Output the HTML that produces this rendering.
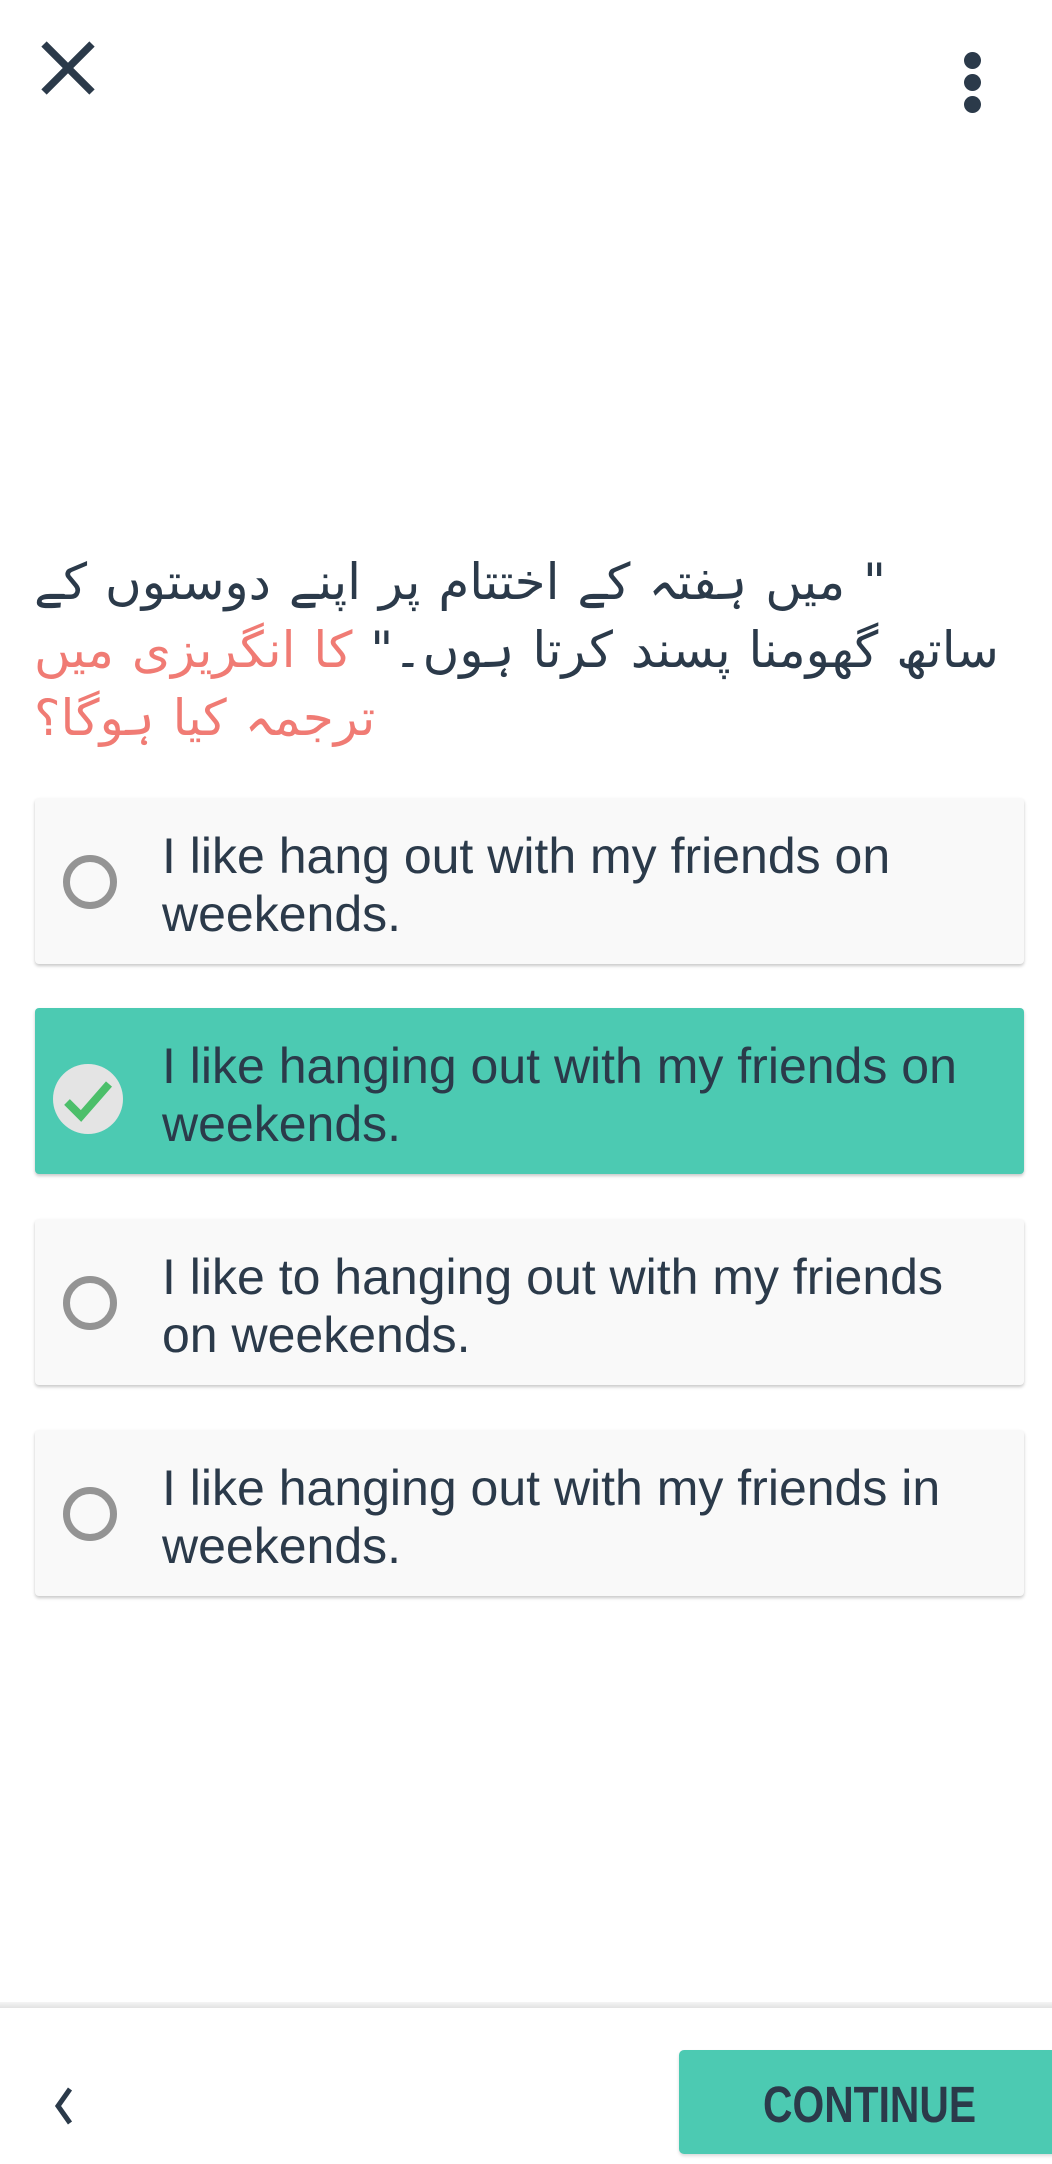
<!DOCTYPE html>
<html><head><meta charset="utf-8"><style>
*{margin:0;padding:0;box-sizing:border-box}
body{width:1052px;height:2164px;background:#fff;position:relative;overflow:hidden;font-family:"Liberation Sans",sans-serif;color:#2b3a4a}
.q{position:absolute;left:34px;right:40px;top:548px;direction:rtl;text-align:left;white-space:nowrap;font-family:"DejaVu Sans","Noto Sans CJK SC",sans-serif;font-size:50px;line-height:68px;word-spacing:2px;color:#2b3a4a}
.q .r{color:#f07b74}
.card{position:absolute;left:35px;width:989px;height:166px;background:#f9f9f9;border-radius:4px;box-shadow:0 2px 3px rgba(0,0,0,.22)}
.card.sel{background:#4ccab2}
.card .t{position:absolute;left:127px;top:29px;font-size:50px;line-height:58px;letter-spacing:0;width:860px}
.rad{position:absolute;left:60px;top:57px;width:54px;height:54px;border:7.5px solid #949494;border-radius:50%;margin-left:-32px}
.chk{position:absolute;left:18px;top:56px;width:70px;height:70px;border-radius:50%;background:#e4e4e4}
</style></head><body>
<svg style="position:absolute;left:40px;top:40px" width="56" height="56" viewBox="0 0 56 56"><path d="M4 4L52 52M52 4L4 52" stroke="#2b3a4a" stroke-width="7.5"/></svg>
<div style="position:absolute;left:964px;top:52px;width:20px">
<div style="width:17px;height:17px;border-radius:50%;background:#2b3a4a;margin-bottom:5px"></div>
<div style="width:17px;height:17px;border-radius:50%;background:#2b3a4a;margin-bottom:5px"></div>
<div style="width:17px;height:17px;border-radius:50%;background:#2b3a4a"></div></div>
<div class="q">" میں ہفتہ کے اختتام پر اپنے دوستوں کے<br>ساتھ گھومنا پسند کرتا ہوں۔" <span class="r">کا انگریزی میں<br>ترجمہ کیا ہوگا؟</span></div>
<div class="card" style="top:798px"><div class="rad"></div><div class="t">I like hang out with my friends on<br>weekends.</div></div>
<div class="card sel" style="top:1008px"><div class="chk"><svg width="70" height="70" viewBox="0 0 70 70"><path d="M14 38L28 52L56 20" fill="none" stroke="#4cbf6a" stroke-width="8"/></svg></div><div class="t">I like hanging out with my friends on<br>weekends.</div></div>
<div class="card" style="top:1219px"><div class="rad"></div><div class="t">I like to hanging out with my friends<br>on weekends.</div></div>
<div class="card" style="top:1430px"><div class="rad"></div><div class="t">I like hanging out with my friends in<br>weekends.</div></div>
<div style="position:absolute;left:0;top:2002px;width:1052px;height:6px;background:linear-gradient(#f4f4f4,#e2e2e2)"></div>
<svg style="position:absolute;left:52px;top:2086px" width="24" height="40" viewBox="0 0 24 40"><path d="M18 3L6 20L18 37" fill="none" stroke="#2b3a4a" stroke-width="5"/></svg>
<div style="position:absolute;left:679px;top:2050px;width:380px;height:104px;background:#4ccab2;border-radius:5px;box-shadow:0 2px 3px rgba(0,0,0,.15)"></div>
<div style="position:absolute;left:763px;top:2078px;font-size:51px;font-weight:bold;transform:scaleX(.8);transform-origin:left top;line-height:54px">CONTINUE</div>
</body></html>
